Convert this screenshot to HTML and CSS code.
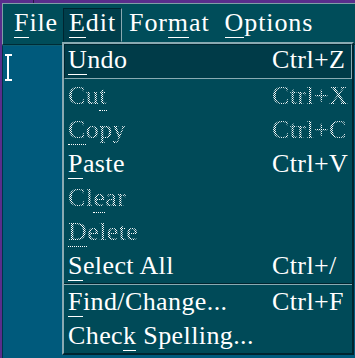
FILE: index.html
```html
<!DOCTYPE html>
<html lang="en">
<head>
  <meta charset="UTF-8">
  <title>Edit menu</title>
  <link rel="stylesheet" href="styles.css">
</head>
<body>
<div class="screen">
  <div class="titlebar"><span class="title-seg"></span></div>

  <div class="window">
    <nav class="menubar">
      <span class="menubar-item file"><u class="mn">F</u>ile</span>
      <span class="menubar-item open"><u class="mn">E</u>dit</span>
      <span class="menubar-item">For<u class="mn">m</u>at</span>
      <span class="menubar-item options"><u class="mn">O</u>ptions</span>
    </nav>

    <div class="editor">
      <svg class="caret" width="7" height="27" viewBox="0 0 7 27">
        <rect x="0" y="0" width="7" height="2" fill="#fff" />
        <rect x="2" y="0" width="2" height="27" fill="#fff" />
        <rect x="0" y="25" width="7" height="2" fill="#fff" />
      </svg>
    </div>
  </div>

  <div class="dropdown">
    <div class="row active"><span class="label"><u class="mn">U</u>ndo</span><span class="key">Ctrl+Z</span></div>
    <div class="row disabled"><span class="label">Cu<u class="mn">t</u></span><span class="key">Ctrl+X</span></div>
    <div class="row disabled"><span class="label"><u class="mn">C</u>opy</span><span class="key">Ctrl+C</span></div>
    <div class="row"><span class="label"><u class="mn">P</u>aste</span><span class="key">Ctrl+V</span></div>
    <div class="row disabled"><span class="label">Cl<u class="mn">e</u>ar</span><span class="key"></span></div>
    <div class="row disabled"><span class="label"><u class="mn">D</u>elete</span><span class="key"></span></div>
    <div class="row"><span class="label"><u class="mn">S</u>elect All</span><span class="key">Ctrl+/</span></div>
    <div class="separator"></div>
    <div class="row"><span class="label"><u class="mn">F</u>ind/Change...</span><span class="key">Ctrl+F</span></div>
    <div class="row"><span class="label">Chec<u class="mn">k</u> Spelling...</span><span class="key"></span></div>
  </div>
</div>
</body>
</html>
```

FILE: styles.css
```css
body {
  margin: 0;
  background: #5a2d8c;

  font-family: 'Liberation Serif', 'Times New Roman', serif;
  font-size: 26px;
  letter-spacing: 0.4px;
  color: #ffffff;
}

.screen {
  position: relative;
  width: 355px;
  height: 358px;
  overflow: hidden;
}

.titlebar {
  display: flex;
  height: 3px;
}

.title-seg {
  width: 33px;
  border-right: 1px solid #2a1448;
}

.window {
  display: flex;
  flex-direction: column;
  height: 355px;
  margin-left: 2px;
}

/* menubar */

.menubar {
  display: flex;
  height: 42px;
  padding: 4px 0 0 4px;
  box-sizing: border-box;
  background: #004d5a;
  border-top: 1px solid #7f9ea6;
  border-left: 1px solid #7f9ea6;
  border-bottom: 1px solid #002c36;
  white-space: nowrap;
}

.menubar-item {
  height: 34px;
  box-sizing: border-box;
  padding: 0 6px 4px;
  line-height: 28px;
  letter-spacing: 0.9px;
  border: 1px solid transparent;
}

.menubar-item.file {
  padding-right: 4px;
}

.menubar-item.open {
  padding: 0 5px 4px;
  background: #003e4b;
  border-color: #002530 #8aaab2 transparent #002530;
}

.menubar-item.options {
  margin-left: 1px;
}

u.mn {
  text-decoration: none;
  border-bottom: 1px solid #ffffff;
}

/* text area */

.editor {
  flex: 1;
  padding: 8px 0 0 2px;
  background: #005a7c;
  border-left: 1px solid #00344a;
  border-top: 1px solid #0e5f72;
}

.caret {
  display: block;
}

/* dropdown menu */

.dropdown {
  position: absolute;
  left: 62px;
  top: 42px;
  width: 292px;
  height: 313px;
  box-sizing: border-box;
  background: #004a58;
  border: 2px solid;
  border-color: #8aaab2 #002530 #002530 #8aaab2;
}

.row {
  display: grid;
  grid-template-columns: 204px auto;
  height: 34px;
  padding-left: 4px;
  line-height: 34px;
  white-space: nowrap;
}

.row.active {
  height: 35px;
  box-sizing: border-box;
  padding: 0 0 3px 3px;
  line-height: 30px;
  background: #003b48;
  border: 1px solid;
  border-color: #002530 #8aaab2 #8aaab2 #002530;
}

.disabled .label,
.disabled .key {
  color: transparent;
  background: repeating-conic-gradient(#ffffff 0 25%, transparent 0 50%) 0 0 / 2px 2px;
  -webkit-background-clip: text;
  background-clip: text;
}

.disabled u.mn {
  border-bottom: 1px dotted #ffffff;
}

.separator {
  height: 2px;
  box-sizing: border-box;
  border-top: 1px solid #002530;
  border-bottom: 1px solid #8aaab2;
}
```
